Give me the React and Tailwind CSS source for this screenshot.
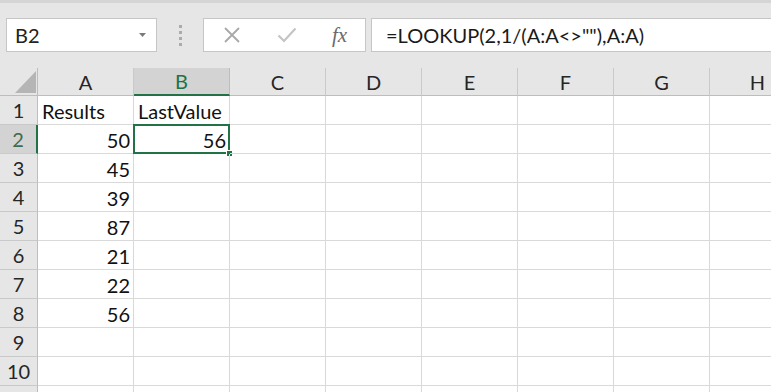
import React from "react";

const COLS = ["A", "B", "C", "D", "E", "F", "G", "H"];
const DATA = {
  1: { A: { v: "Results", left: true }, B: { v: "LastValue", left: true } },
  2: { A: { v: "50" }, B: { v: "56" } },
  3: { A: { v: "45" } },
  4: { A: { v: "39" } },
  5: { A: { v: "87" } },
  6: { A: { v: "21" } },
  7: { A: { v: "22" } },
  8: { A: { v: "56" } },
};
const ROWS = [1, 2, 3, 4, 5, 6, 7, 8, 9, 10, 11];

function Toolbar() {
  return (
    <div className="h-[68px] bg-[#e6e6e6] border-t-[3px] border-[#d5d5d5] pt-[15px] flex items-start">
      {/* Name box */}
      <div className="ml-[6px] w-[151px] h-[34px] bg-white border border-[#c6c6c6] flex items-center justify-between pl-[8px] pr-[10px]">
        <span className="text-[20px] text-[#222]">B2</span>
        <svg width="7" height="4" viewBox="0 0 7 4">
          <path d="M0 0 L7 0 L3.5 4 Z" fill="#7a7a7a" />
        </svg>
      </div>
      {/* separator dots */}
      <div className="w-[46px] h-[34px] flex flex-col items-center justify-center gap-[3px]">
        <div className="w-[3px] h-[3px] bg-[#ababab]" />
        <div className="w-[3px] h-[3px] bg-[#ababab]" />
        <div className="w-[3px] h-[3px] bg-[#ababab]" />
        <div className="w-[3px] h-[3px] bg-[#ababab]" />
      </div>
      {/* buttons */}
      <div className="w-[163px] h-[34px] bg-white border border-[#c6c6c6] flex items-center">
        <div className="w-[55px] flex justify-center pl-[1px]">
          <svg width="18" height="18" viewBox="0 0 18 18">
            <path d="M2 2 L16 16 M16 2 L2 16" stroke="#a8a8a8" strokeWidth="1.8" fill="none" />
          </svg>
        </div>
        <div className="w-[55px] flex justify-center">
          <svg width="20" height="16" viewBox="0 0 20 16">
            <path d="M1.5 8.5 L7 14 L18.5 1.5" stroke="#c4c4c4" strokeWidth="2.2" fill="none" />
          </svg>
        </div>
        <div className="w-[51px] flex justify-center">
          <span
            className="text-[21px] italic text-[#6a6a6a] leading-none"
            style={{ fontFamily: '"Liberation Serif", "DejaVu Serif", serif' }}
          >
            fx
          </span>
        </div>
      </div>
      {/* formula bar */}
      <div className="ml-[5px] flex-1 h-[34px] bg-white border border-[#c6c6c6] border-r-0 flex items-center pl-[14px]">
        <span className="text-[20px] text-[#1a1a1a] whitespace-nowrap">=LOOKUP(2,1/(A:A&lt;&gt;""),A:A)</span>
      </div>
    </div>
  );
}

function Grid() {
  return (
    <div className="grid grid-cols-[38px_96px_96px_96px_96px_96px_96px_96px_96px]">
      {/* header row */}
      <div className="h-[28px] bg-[#e6e6e6] border-r border-b border-[#bdbdbd] relative">
        <svg className="absolute left-[15px] top-[3px]" width="21" height="22" viewBox="0 0 21 22">
          <path d="M21 0 L21 22 L0 22 Z" fill="#b5b5b5" />
        </svg>
      </div>
      {COLS.map((c) =>
        c === "B" ? (
          <div
            key={c}
            className="h-[28px] bg-[#d3d3d3] border-r border-[#bdbdbd] border-b-2 border-b-[#217346] flex items-center justify-center text-[20px] text-[#217346]"
          >
            {c}
          </div>
        ) : (
          <div
            key={c}
            className="h-[28px] bg-[#e6e6e6] border-r border-b border-[#c9c9c9] border-b-[#bdbdbd] flex items-center justify-center text-[20px] text-[#262626]"
          >
            {c}
          </div>
        )
      )}
      {ROWS.map((r) => (
        <React.Fragment key={r}>
          {r === 2 ? (
            <div className="h-[29px] bg-[#d3d3d3] border-b border-[#c9c9c9] border-r-2 border-r-[#217346] flex items-center justify-center text-[20px] text-[#3e6a4f]">
              {r}
            </div>
          ) : (
            <div className="h-[29px] bg-[#e6e6e6] border-r border-b border-[#c9c9c9] border-r-[#bdbdbd] flex items-center justify-center text-[20px] text-[#262626]">
              {r < 11 ? r : null}
            </div>
          )}
          {COLS.map((c) => {
            const cell = DATA[r] && DATA[r][c];
            const selected = r === 2 && c === "B";
            return (
              <div
                key={c}
                className={
                  "h-[29px] border-r border-b border-[#d9d9d9] flex items-center text-[20px] text-[#111] relative " +
                  (cell && cell.left ? "justify-start pl-[4px]" : "justify-end pr-[3px]")
                }
              >
                {cell ? <span className="pt-[2px]">{cell.v}</span> : null}
                {selected ? (
                  <>
                    <div className="absolute left-[-1px] top-[-1px] right-[-1px] bottom-[-1px] border-2 border-[#217346] pointer-events-none" />
                    <div className="absolute right-[-4px] bottom-[-4px] w-[7px] h-[7px] bg-[#217346] border border-white" />
                  </>
                ) : null}
              </div>
            );
          })}
        </React.Fragment>
      ))}
    </div>
  );
}

export default function App() {
  return (
    <div
      className="w-[771px] h-[392px] overflow-hidden bg-white"
      style={{ fontFamily: 'Lato, "Noto Sans", sans-serif' }}
    >
      <Toolbar />
      <Grid />
    </div>
  );
}
